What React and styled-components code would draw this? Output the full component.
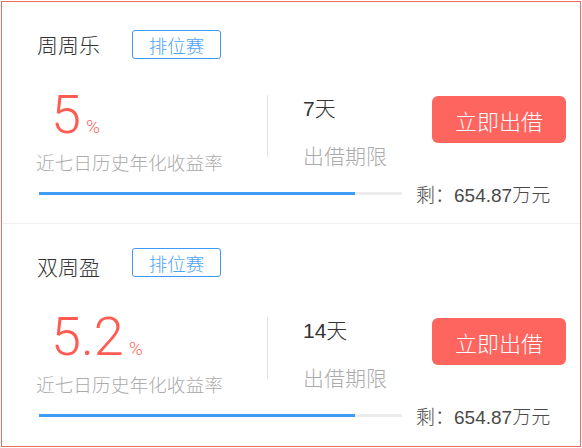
import React from 'react';
import styled, { createGlobalStyle } from 'styled-components';

const GlobalStyle = createGlobalStyle`
  body {
    margin: 0;
    background: #fff;
    font-family: "Liberation Sans", "Noto Sans CJK SC", sans-serif;
  }
`;

const Frame = styled.div`
  box-sizing: border-box;
  width: 580px;
  height: 446px;
  margin: 1px 0 0 1px;
  border: 1px solid #f26a63;
  background: #fff;
`;

const Card = styled.div`
  box-sizing: border-box;
  height: ${({ $height }) => $height}px;
  padding: 28px 14px 0 34px;
  border-bottom: ${({ $last }) => ($last ? 'none' : '1px solid #efefef')};
`;

const Header = styled.div`
  display: flex;
  align-items: center;
  height: 29px;
`;

const Title = styled.span`
  font-family: "Noto Sans CJK SC", sans-serif;
  font-weight: 300;
  font-size: 21px;
  line-height: 21px;
  color: #333;
  margin-left: 1px;
`;

const Tag = styled.span`
  box-sizing: border-box;
  display: flex;
  align-items: center;
  justify-content: center;
  width: 89px;
  height: 29px;
  margin-left: 32px;
  margin-bottom: ${({ $lift }) => ($lift ? 8 : 0)}px;
  border: 1.5px solid #3d9af5;
  border-radius: 3px;
  font-family: "Noto Sans CJK SC", sans-serif;
  font-weight: 300;
  font-size: 18.5px;
  color: #4fa3f7;
`;

const Main = styled.div`
  display: flex;
  align-items: flex-start;
  margin-top: 29px;
`;

const Rate = styled.div`
  width: 231px;
  display: flex;
  flex-direction: column;
`;

const RateValue = styled.div`
  display: flex;
  align-items: baseline;
  margin-left: 15px;
  color: #ff5b52;
`;

const Big = styled.span`
  font-family: Roboto, "Liberation Sans", sans-serif;
  font-weight: 300;
  font-size: 54px;
  line-height: 53px;
`;

const Percent = styled.span`
  font-family: Roboto, "Liberation Sans", sans-serif;
  font-weight: 300;
  font-size: 19px;
  margin-left: 5px;
  color: #ff6a63;
`;

const Label = styled.div`
  margin-top: 12px;
  font-family: "Noto Sans CJK SC", sans-serif;
  font-weight: 300;
  font-size: ${({ $size }) => $size}px;
  line-height: ${({ $size }) => $size}px;
  color: #ababab;
  white-space: nowrap;
`;

const Divider = styled.div`
  width: 1px;
  height: 62px;
  margin-top: 7px;
  background: #e4e4e4;
`;

const Term = styled.div`
  display: flex;
  flex-direction: column;
  padding-left: 35px;
  padding-top: 10px;
`;

const TermValue = styled.div`
  font-family: "Liberation Sans", "Noto Sans CJK SC", sans-serif;
  font-weight: 300;
  font-size: 21px;
  line-height: 21px;
  color: #333;
`;

const TermLabel = styled(Label)`
  margin-top: 26px;
`;

const LendButton = styled.button`
  box-sizing: border-box;
  width: 134px;
  height: 47px;
  margin-left: auto;
  margin-top: 8px;
  border: none;
  border-radius: 6px;
  background: #ff655f;
  color: #fff;
  font-family: "Noto Sans CJK SC", sans-serif;
  font-weight: 300;
  font-size: 22px;
  padding: 0;
  cursor: pointer;
`;

const Footer = styled.div`
  display: flex;
  align-items: center;
  height: 20px;
  margin-top: 12px;
`;

const Track = styled.div`
  width: 363px;
  height: 3px;
  margin-left: 3px;
  background: #ececec;
`;

const Fill = styled.div`
  height: 100%;
  background: #3f9cf6;
`;

const Remain = styled.span`
  margin-left: 14px;
  font-family: "Liberation Sans", "Noto Sans CJK SC", sans-serif;
  font-weight: 300;
  font-size: 19px;
  color: #4a4a4a;
  white-space: nowrap;
`;

const products = [
  { name: '周周乐', rate: '5', days: '7天', left: '654.87万元', progress: 87, height: 222 },
  { name: '双周盈', rate: '5.2', days: '14天', left: '654.87万元', progress: 87, height: 221, lift: true },
];

const ProductCard = ({ item, last }) => (
  <Card $height={item.height} $last={last}>
    <Header>
      <Title>{item.name}</Title>
      <Tag $lift={item.lift}>排位赛</Tag>
    </Header>
    <Main>
      <Rate>
        <RateValue>
          <Big>{item.rate}</Big>
          <Percent>%</Percent>
        </RateValue>
        <Label $size={18.7}>近七日历史年化收益率</Label>
      </Rate>
      <Divider />
      <Term>
        <TermValue>{item.days}</TermValue>
        <TermLabel $size={21}>出借期限</TermLabel>
      </Term>
      <LendButton>立即出借</LendButton>
    </Main>
    <Footer>
      <Track>
        <Fill style={{ width: `${item.progress}%` }} />
      </Track>
      <Remain>剩：{item.left}</Remain>
    </Footer>
  </Card>
);

export default function App() {
  return (
    <>
      <GlobalStyle />
      <Frame>
        {products.map((p, i) => (
          <ProductCard key={p.name} item={p} last={i === products.length - 1} />
        ))}
      </Frame>
    </>
  );
}
